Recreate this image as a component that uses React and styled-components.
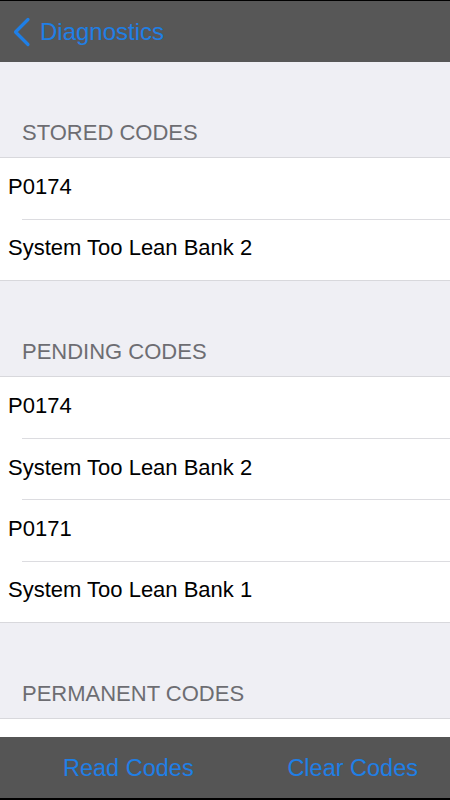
import React from "react";
import styled, { createGlobalStyle } from "styled-components";

const Global = createGlobalStyle`
  html, body { margin: 0; padding: 0; background: #000; }
  body { font-family: "Liberation Sans", Arial, sans-serif; -webkit-font-smoothing: antialiased; }
`;

const Screen = styled.div`
  width: 450px;
  height: 800px;
  display: flex;
  flex-direction: column;
  background: #efeff4;
  overflow: hidden;
`;

const NavBar = styled.header`
  box-sizing: border-box;
  height: 62px;
  flex: none;
  border-top: 1px solid #000;
  background: #575757;
  display: flex;
  align-items: center;
  padding-left: 12px;
  gap: 8px;
`;

const BackLabel = styled.span`
  color: #1f7fe6;
  font-size: 24px;
  line-height: 28px;
`;

const Content = styled.main`
  flex: 1;
  overflow: hidden;
  display: flex;
  flex-direction: column;
`;

const SectionHeader = styled.div`
  box-sizing: border-box;
  height: ${(p) => (p.$first ? "96px" : "96px")};
  flex: none;
  display: flex;
  align-items: flex-end;
  padding: 0 0 11px 22px;
  border-bottom: 1px solid #d8d8dc;
  color: #6d6d72;
  font-size: 22px;
  line-height: 26px;
  text-transform: uppercase;
`;

const List = styled.div`
  background: #fff;
  border-bottom: ${(p) => (p.$open ? "none" : "1px solid #d8d8dc")};
  min-height: ${(p) => (p.$open ? "20px" : "0")};
  flex: ${(p) => (p.$open ? 1 : "none")};
`;

const Row = styled.div`
  position: relative;
  box-sizing: border-box;
  height: ${(p) => (p.$last ? "60.5px" : "61.5px")};
  display: flex;
  align-items: center;
  padding: 0 0 3px 8px;
  color: #000;
  font-size: 22px;
  line-height: 26px;
  ${(p) =>
    !p.$last &&
    `
    &::after {
      content: "";
      position: absolute;
      left: 22px;
      right: 0;
      bottom: 0;
      height: 1px;
      background: #dcdce0;
    }
  `}
`;

const Toolbar = styled.footer`
  box-sizing: border-box;
  height: 63px;
  flex: none;
  background: #555555;
  border-bottom: 2px solid #000;
  display: flex;
  align-items: center;
  justify-content: space-between;
  padding: 0 32px 0 63px;
`;

const ToolButton = styled.span`
  color: #1f7fe6;
  font-size: 23.5px;
  line-height: 28px;
`;

const Chevron = () => (
  <svg width="20" height="30" viewBox="0 0 20 30" fill="none">
    <path
      d="M16 2.5 L3.5 15 L16 27.5"
      stroke="#1f7fe6"
      strokeWidth="3.2"
      strokeLinecap="round"
      strokeLinejoin="round"
    />
  </svg>
);

const sections = [
  { title: "Stored Codes", rows: ["P0174", "System Too Lean Bank 2"] },
  {
    title: "Pending Codes",
    rows: ["P0174", "System Too Lean Bank 2", "P0171", "System Too Lean Bank 1"],
  },
];

export default function App() {
  return (
    <>
      <Global />
      <Screen>
        <NavBar>
          <Chevron />
          <BackLabel>Diagnostics</BackLabel>
        </NavBar>
        <Content>
          {sections.map((s) => (
            <React.Fragment key={s.title}>
              <SectionHeader>{s.title}</SectionHeader>
              <List>
                {s.rows.map((r, i) => (
                  <Row key={i} $last={i === s.rows.length - 1}>
                    {r}
                  </Row>
                ))}
              </List>
            </React.Fragment>
          ))}
          <SectionHeader>Permanent Codes</SectionHeader>
          <List $open />
        </Content>
        <Toolbar>
          <ToolButton>Read Codes</ToolButton>
          <ToolButton>Clear Codes</ToolButton>
        </Toolbar>
      </Screen>
    </>
  );
}
